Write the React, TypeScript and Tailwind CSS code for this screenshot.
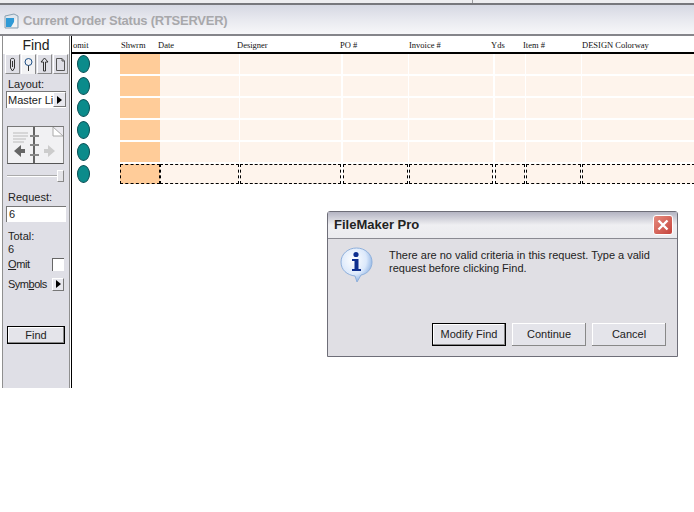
import React from 'react';

const COLS = ['w-[40px] bg-[#ffcc99]', 'w-[79px]', 'w-[101px] ml-px', 'w-[65px] ml-[2px]', 'w-[84px] ml-px', 'w-[30px] ml-[2px]', 'w-[55px] ml-px', 'w-[113px] ml-px'];

const HEADERS = [
  { label: 'omit', cls: 'w-[49px] pl-px' },
  { label: 'Shwrm', cls: 'w-[37px]' },
  { label: 'Date', cls: 'w-[79px]' },
  { label: 'Designer', cls: 'w-[103px]' },
  { label: 'PO #', cls: 'w-[69px]' },
  { label: 'Invoice #', cls: 'w-[82px]' },
  { label: 'Yds', cls: 'w-[32px]' },
  { label: 'Item #', cls: 'w-[59px]' },
  { label: 'DESIGN Colorway', cls: 'flex-1 pt-px' },
];

const BUTTON = 'w-[74px] h-[23px] bg-[#e4e4ea] text-center shadow-[inset_-1px_-1px_0_#888,inset_1px_1px_0_#fff]';

function Oval() {
  return <div className="w-[13px] h-[18px] rounded-[50%] bg-[#0b8b8b] border border-[#0a4f55]" />;
}

function Row({ active }: { active?: boolean }) {
  return (
    <div className="flex h-[20px] mb-[2px]">
      <div className="w-[48px] pl-[5px] flex items-center shrink-0">
        <Oval />
      </div>
      {COLS.map((c, i) => (
        <div
          key={i}
          className={`${c} shrink-0 h-[20px] ${i === 0 ? '' : 'bg-[#fef4ec]'} ${active ? 'border border-dashed border-black' : ''}`}
        />
      ))}
    </div>
  );
}

function TabIcon({ kind, selected }: { kind: number; selected?: boolean }) {
  return (
    <div
      className={`w-[15px] h-[20px] flex items-center justify-center border-t border-l border-white border-r border-r-[#8a8a8a] ${
        selected ? 'bg-[#f2f2f4]' : 'bg-[#dfdfe6] border-b border-b-[#8a8a8a]'
      }`}
    >
      <svg width="11" height="15" viewBox="0 0 11 15" fill="none" stroke="#333" strokeWidth="1">
        {kind === 0 && <path d="M3.5 2.5C3.5 1 7.5 1 7.5 2.5V11L5.5 14L3.5 11Z M5.5 4V10" />}
        {kind === 1 && (
          <>
            <circle cx="5.5" cy="5" r="3.5" stroke="#1d4f86" />
            <path d="M5.5 8.5V14" />
          </>
        )}
        {kind === 2 && <path d="M5.5 1L2 5H4.5V14H6.5V5H9Z" />}
        {kind === 3 && <path d="M1.5 1.5H7L9.5 4V13.5H1.5Z M7 1.5V4H9.5" stroke="#555" />}
      </svg>
    </div>
  );
}

function ArrowButton({ cls }: { cls: string }) {
  return (
    <div className={`${cls} bg-[#e8e8ee] border-t border-l border-white border-r border-b border-r-[#777] border-b-[#777] flex items-center justify-center shrink-0`}>
      <div className="w-0 h-0 border-y-[4px] border-y-transparent border-l-[5px] border-l-black" />
    </div>
  );
}

function BookIcon() {
  return (
    <div className="w-[57px] h-[38px] ml-[4px] mt-[18px] bg-[#ecebf0] border border-[#777] border-b-[#555] border-r-[#888]">
      <svg width="55" height="36" viewBox="0 0 55 36">
        <path d="M45 0L55 9V36H0V0Z" fill="#f1f1f3" />
        <path d="M45 0V9H55Z" fill="#fff" stroke="#aaa" />
        <path d="M5 6H20M5 9H20M5 12H18M5 15H16" stroke="#bbb" strokeWidth="1" />
        <path d="M26 0V36" stroke="#333" strokeWidth="1.5" />
        <path d="M22 9H31M22 18H31M22 28H31" stroke="#888" strokeWidth="2" />
        <path d="M6 24L13 18V22H17V26H13V30Z" fill="#666" />
        <path d="M47 24L40 18V22H36V26H40V30Z" fill="#ccc" />
      </svg>
    </div>
  );
}

function Sidebar() {
  return (
    <div className="w-[68px] h-[352px] shrink-0 ml-[2px] bg-[#dfdfe6] border-l border-r border-[#8f8f8f] text-[11px] leading-[14px] text-[#222]">
      <div className="h-[18px] bg-white text-center text-[14px] leading-[18px] text-[#222]">Find</div>
      <div className="flex h-[20px] pl-[2px] gap-px bg-[#dfdfe6]">
        <TabIcon kind={0} />
        <TabIcon kind={1} selected />
        <TabIcon kind={2} />
        <TabIcon kind={3} />
      </div>
      <div className="pl-[5px] mt-[3px]">Layout:</div>
      <div className="ml-[3px] w-[60px] h-[17px] flex bg-white border-t border-l border-[#777]">
        <div className="flex-1 pl-[1px] whitespace-nowrap leading-[16px]">Master Li</div>
        <ArrowButton cls="w-[13px] h-[15px]" />
      </div>
      <BookIcon />
      <div className="relative ml-[4px] mt-[6px] w-[57px] h-[12px] flex items-center">
        <div className="w-full h-[2px] bg-[#aaa] border-b border-white" />
        <div className="absolute right-0 top-0 w-[7px] h-[12px] bg-[#e4e4e8] border border-[#888] border-t-white border-l-white" />
      </div>
      <div className="pl-[5px] mt-[8px]">Request:</div>
      <div className="ml-[3px] mt-[2px] w-[60px] h-[16px] bg-white border-t border-l border-[#777] pl-[2px] leading-[15px]">6</div>
      <div className="pl-[5px] mt-[7px]">Total:</div>
      <div className="pl-[5px] mt-[-1px]">6</div>
      <div className="flex items-center justify-between pl-[5px] pr-[5px] mt-[1px] h-[14px]">
        <span className="tracking-[-0.4px]"><span className="underline">O</span>mit</span>
        <div className="w-[12px] h-[13px] bg-white border-t border-l border-[#666]" />
      </div>
      <div className="flex items-center justify-between pl-[5px] pr-[5px] mt-[6px] h-[14px]">
        <span className="tracking-[-0.5px]">Sym<span className="underline">b</span>ols</span>
        <ArrowButton cls="w-[12px] h-[13px]" />
      </div>
      <div className="ml-[4px] mt-[35px] w-[58px] h-[18px] border border-black bg-[#e4e4ea] text-center leading-[16px] shadow-[inset_-1px_-1px_0_#888,inset_1px_1px_0_#fff]">
        Find
      </div>
    </div>
  );
}

function Dialog() {
  return (
    <div className="absolute left-[327px] top-[211px] w-[351px] h-[146px] bg-[#e0dfe4] border border-[#6e6e78] rounded-t-[3px] text-[11px] text-[#222] flex flex-col">
      <div className="h-[27px] shrink-0 bg-gradient-to-b from-[#b4b4c2] via-[#efeff2] to-[#ebebef] border-b border-[#8a8a92] flex items-center justify-between pl-[6px] pr-[4px]">
        <span className="text-[13px] font-bold text-[#222]">FileMaker Pro</span>
        <div className="w-[20px] h-[20px] rounded-[3px] bg-gradient-to-br from-[#e58a7e] to-[#c5423c] border border-white flex items-center justify-center">
          <svg width="12" height="12" viewBox="0 0 12 12">
            <path d="M1.5 1.5L10.5 10.5M10.5 1.5L1.5 10.5" stroke="#fff" strokeWidth="2.4" />
          </svg>
        </div>
      </div>
      <div className="flex pl-[12px] pt-[8px] flex-1">
        <svg width="33" height="36" viewBox="0 0 33 36" className="shrink-0">
          <defs>
            <radialGradient id="bubble" cx="40%" cy="35%" r="70%">
              <stop offset="0%" stopColor="#ffffff" />
              <stop offset="60%" stopColor="#dce9fb" />
              <stop offset="100%" stopColor="#7ba6de" />
            </radialGradient>
          </defs>
          <path d="M16.5 1C25 1 32 7 32 15C32 22 27 27 21 28L17 35L15 29C7 28 1 23 1 15C1 7 8 1 16.5 1Z" fill="url(#bubble)" stroke="#8fb0dc" />
          <circle cx="16" cy="7.5" r="2.6" fill="#0f2f8f" />
          <path d="M12 12H18.5V22H21V24H12V22H14.5V14H12Z" fill="#0f2f8f" />
        </svg>
        <div className="ml-[16px] mt-[2px] w-[268px] leading-[13px]">
          There are no valid criteria in this request. Type a valid request before clicking Find.
        </div>
      </div>
      <div className="flex justify-end gap-[6px] pr-[11px] pb-[10px]">
        <div className={`${BUTTON} border border-black leading-[21px]`}>Modify Find</div>
        <div className={`${BUTTON} leading-[23px]`}>Continue</div>
        <div className={`${BUTTON} leading-[23px]`}>Cancel</div>
      </div>
    </div>
  );
}

export default function App() {
  return (
    <div className="relative w-[694px] h-[512px] bg-white overflow-hidden font-['Liberation_Sans',sans-serif]">
      <div className="h-[5px] bg-[#ededf0] border-b-2 border-[#77777c] flex">
        <div className="w-[472px]" />
        <div className="w-px bg-[#9a9a9e]" />
      </div>
      <div className="h-[31px] pt-[2px] bg-gradient-to-b from-[#d6d8e3] via-[#e8e9ef] to-[#f7f7f9] border-b-2 border-[#85858a] flex items-center pl-[4px]">
        <svg width="15" height="16" viewBox="0 0 15 16">
          <path d="M1 3L10 1L14 3V15H1Z" fill="#dfe6ee" stroke="#8aa0b0" />
          <path d="M2 5H10V14H2Z" fill="#2f9ad6" />
          <path d="M7 14L13 4V14Z" fill="#f3f3f3" />
        </svg>
        <span className="ml-[4px] text-[13px] font-bold tracking-[-0.25px] text-[#a8a8ab] whitespace-nowrap">Current Order Status (RTSERVER)</span>
      </div>
      <div className="flex h-[352px]">
        <Sidebar />
        <div className="w-px shrink-0 bg-white" />
        <div className="relative flex-1 min-w-0 h-full border-l border-black">
          <div className="h-[18px] flex items-center border-b-2 border-black pt-[2px] font-['Liberation_Serif',serif] text-[8.5px] text-[#111] whitespace-nowrap">
            {HEADERS.map((h) => (
              <div key={h.label} className={h.cls}>{h.label}</div>
            ))}
          </div>
          <div>
            {[0, 1, 2, 3, 4].map((i) => (
              <Row key={i} />
            ))}
            <Row active />
          </div>
        </div>
      </div>
      <Dialog />
    </div>
  );
}
